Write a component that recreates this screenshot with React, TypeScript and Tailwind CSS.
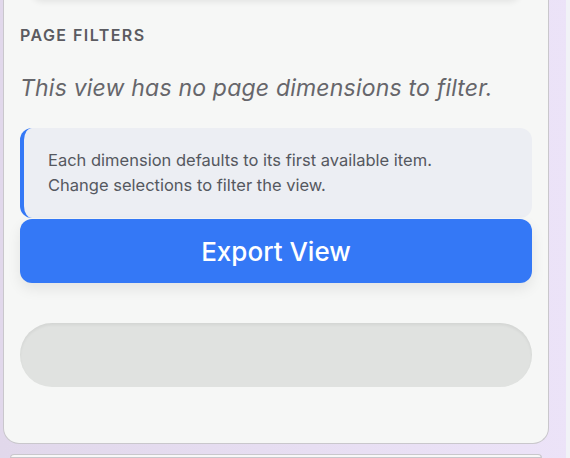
const font = { fontFamily: 'Inter, "Noto Sans", sans-serif' }

export default function App() {
  return (
    <div
      className="relative h-[458px] w-[570px] overflow-hidden bg-gradient-to-r from-[#e1d8eb] to-[#ece3f8]"
      style={font}
    >
      <div className="flex h-full">
        <div className="ml-[3px] flex w-[546px] flex-col">
          {/* filters panel */}
          <div className="rounded-b-2xl border-x-[1.5px] border-b-[1.5px] border-[#c9c7cc] bg-[#f6f7f6] px-4 pb-[56px]">
            <div className="mx-[12px] -mt-[20px] h-[20px] rounded-xl bg-[#f7f7f7] shadow-[0_2px_6px_rgba(0,0,0,0.08)]" />
            <h3 className="mt-[24px] text-[16px] font-semibold uppercase leading-[22px] tracking-[0.09em] text-[#5b5b61]">
              Page Filters
            </h3>
            <p className="mt-[27px] text-[23px] italic leading-[30px] tracking-[0.2px] text-[#66666b]">
              This view has no page dimensions to filter.
            </p>
            <div className="mt-[25px] h-[90px] rounded-xl border-l-4 border-[#3478f6] bg-[#eceef3] py-[20px] pl-[24px] pr-4 text-[16.5px] leading-[25px] text-[#55585f]">
              Each dimension defaults to its first available item.
              <br />
              Change selections to filter the view.
            </div>
            <button className="mt-px flex h-[64px] w-full items-center justify-center rounded-xl bg-[#3478f6] text-[26px] font-medium text-white shadow-[0_6px_14px_rgba(0,0,0,0.08)]">
              Export View
            </button>
            <div className="mt-[40px] h-[64px] rounded-full bg-[#e0e2e0] shadow-[inset_0_2px_3px_rgba(0,0,0,0.06)]" />
          </div>
          {/* next card */}
          <div className="mx-[7px] mt-[10px] h-[40px] rounded-t-2xl border-[1.5px] border-[#c9c7cc] bg-[#f8f8f8]" />
        </div>
        <div className="ml-auto h-full w-[4px] bg-[#f1f2f7]" />
      </div>
    </div>
  )
}
